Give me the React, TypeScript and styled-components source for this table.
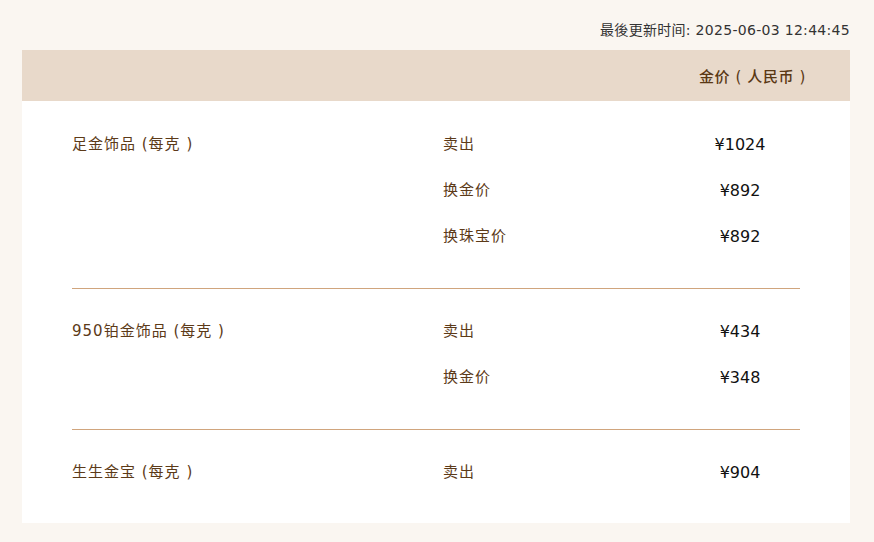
import React from "react";
import styled, { createGlobalStyle } from "styled-components";

interface IPriceRow {
  type: string;
  price: string;
}
interface IPriceGroup {
  name: string;
  rows: IPriceRow[];
}

const groups: IPriceGroup[] = [
  {
    name: "足金饰品 (每克 )",
    rows: [
      { type: "卖出", price: "¥1024" },
      { type: "换金价", price: "¥892" },
      { type: "换珠宝价", price: "¥892" },
    ],
  },
  {
    name: "950铂金饰品 (每克 )",
    rows: [
      { type: "卖出", price: "¥434" },
      { type: "换金价", price: "¥348" },
    ],
  },
  {
    name: "生生金宝 (每克 )",
    rows: [{ type: "卖出", price: "¥904" }],
  },
];

const App: React.FC = () => {
  return (
    <>
      <GlobalStyle />
      <Page>
        <UpdatedAt>最後更新时间: 2025-06-03 12:44:45</UpdatedAt>
        <Panel>
          <Header>
            <HeaderTitle>金价 ( 人民币 )</HeaderTitle>
          </Header>
          <Body>
            {groups.map((g) => (
              <Group key={g.name}>
                <GroupName>{g.name}</GroupName>
                <Rows>
                  {g.rows.map((r) => (
                    <Row key={r.type}>
                      <TypeCell>{r.type}</TypeCell>
                      <PriceCell>{r.price}</PriceCell>
                    </Row>
                  ))}
                </Rows>
              </Group>
            ))}
          </Body>
        </Panel>
      </Page>
    </>
  );
};

export default App;

const GlobalStyle = createGlobalStyle`
  html, body {
    margin: 0;
    padding: 0;
    background: #faf6f1;
  }
  body {
    font-family: "DejaVu Sans", "Noto Sans CJK SC", sans-serif;
  }
`;

const Page = styled.div`
  width: 874px;
  height: 542px;
  box-sizing: border-box;
  padding: 20px 24px 0 22px;
  background: #faf6f1;
`;

const UpdatedAt = styled.div`
  text-align: right;
  font-size: 14px;
  letter-spacing: 0.3px;
  line-height: 20px;
  color: #333;
  margin-bottom: 10px;
`;

const Panel = styled.div`
  background: #fff;
`;

const Header = styled.div`
  height: 51px;
  background: #e8d9ca;
  display: flex;
  align-items: center;
  justify-content: flex-end;
  padding-right: 44px;
`;

const HeaderTitle = styled.div`
  font-size: 15px;
  letter-spacing: 0.6px;
  color: #5a3814;
  font-weight: 500;
`;

const Body = styled.div`
  padding: 1px 50px 0;
`;

const Group = styled.div`
  display: grid;
  grid-template-columns: 371px 1fr;
  padding: 19px 0 29px;
  border-bottom: 1px solid #d0a57d;
  &:last-child {
    border-bottom: none;
    padding-bottom: 28px;
  }
`;

const GroupName = styled.div`
  font-size: 15px;
  letter-spacing: 1px;
  line-height: 46px;
  color: #5c3a18;
`;

const Rows = styled.div`
  display: flex;
  flex-direction: column;
`;

const Row = styled.div`
  display: grid;
  grid-template-columns: 1fr 120px;
  height: 46px;
  align-items: center;
`;

const TypeCell = styled.div`
  font-size: 15px;
  line-height: 1;
  letter-spacing: 1px;
  color: #5c3a18;
`;

const PriceCell = styled.div`
  font-size: 16px;
  color: #111;
  text-align: center;
`;
